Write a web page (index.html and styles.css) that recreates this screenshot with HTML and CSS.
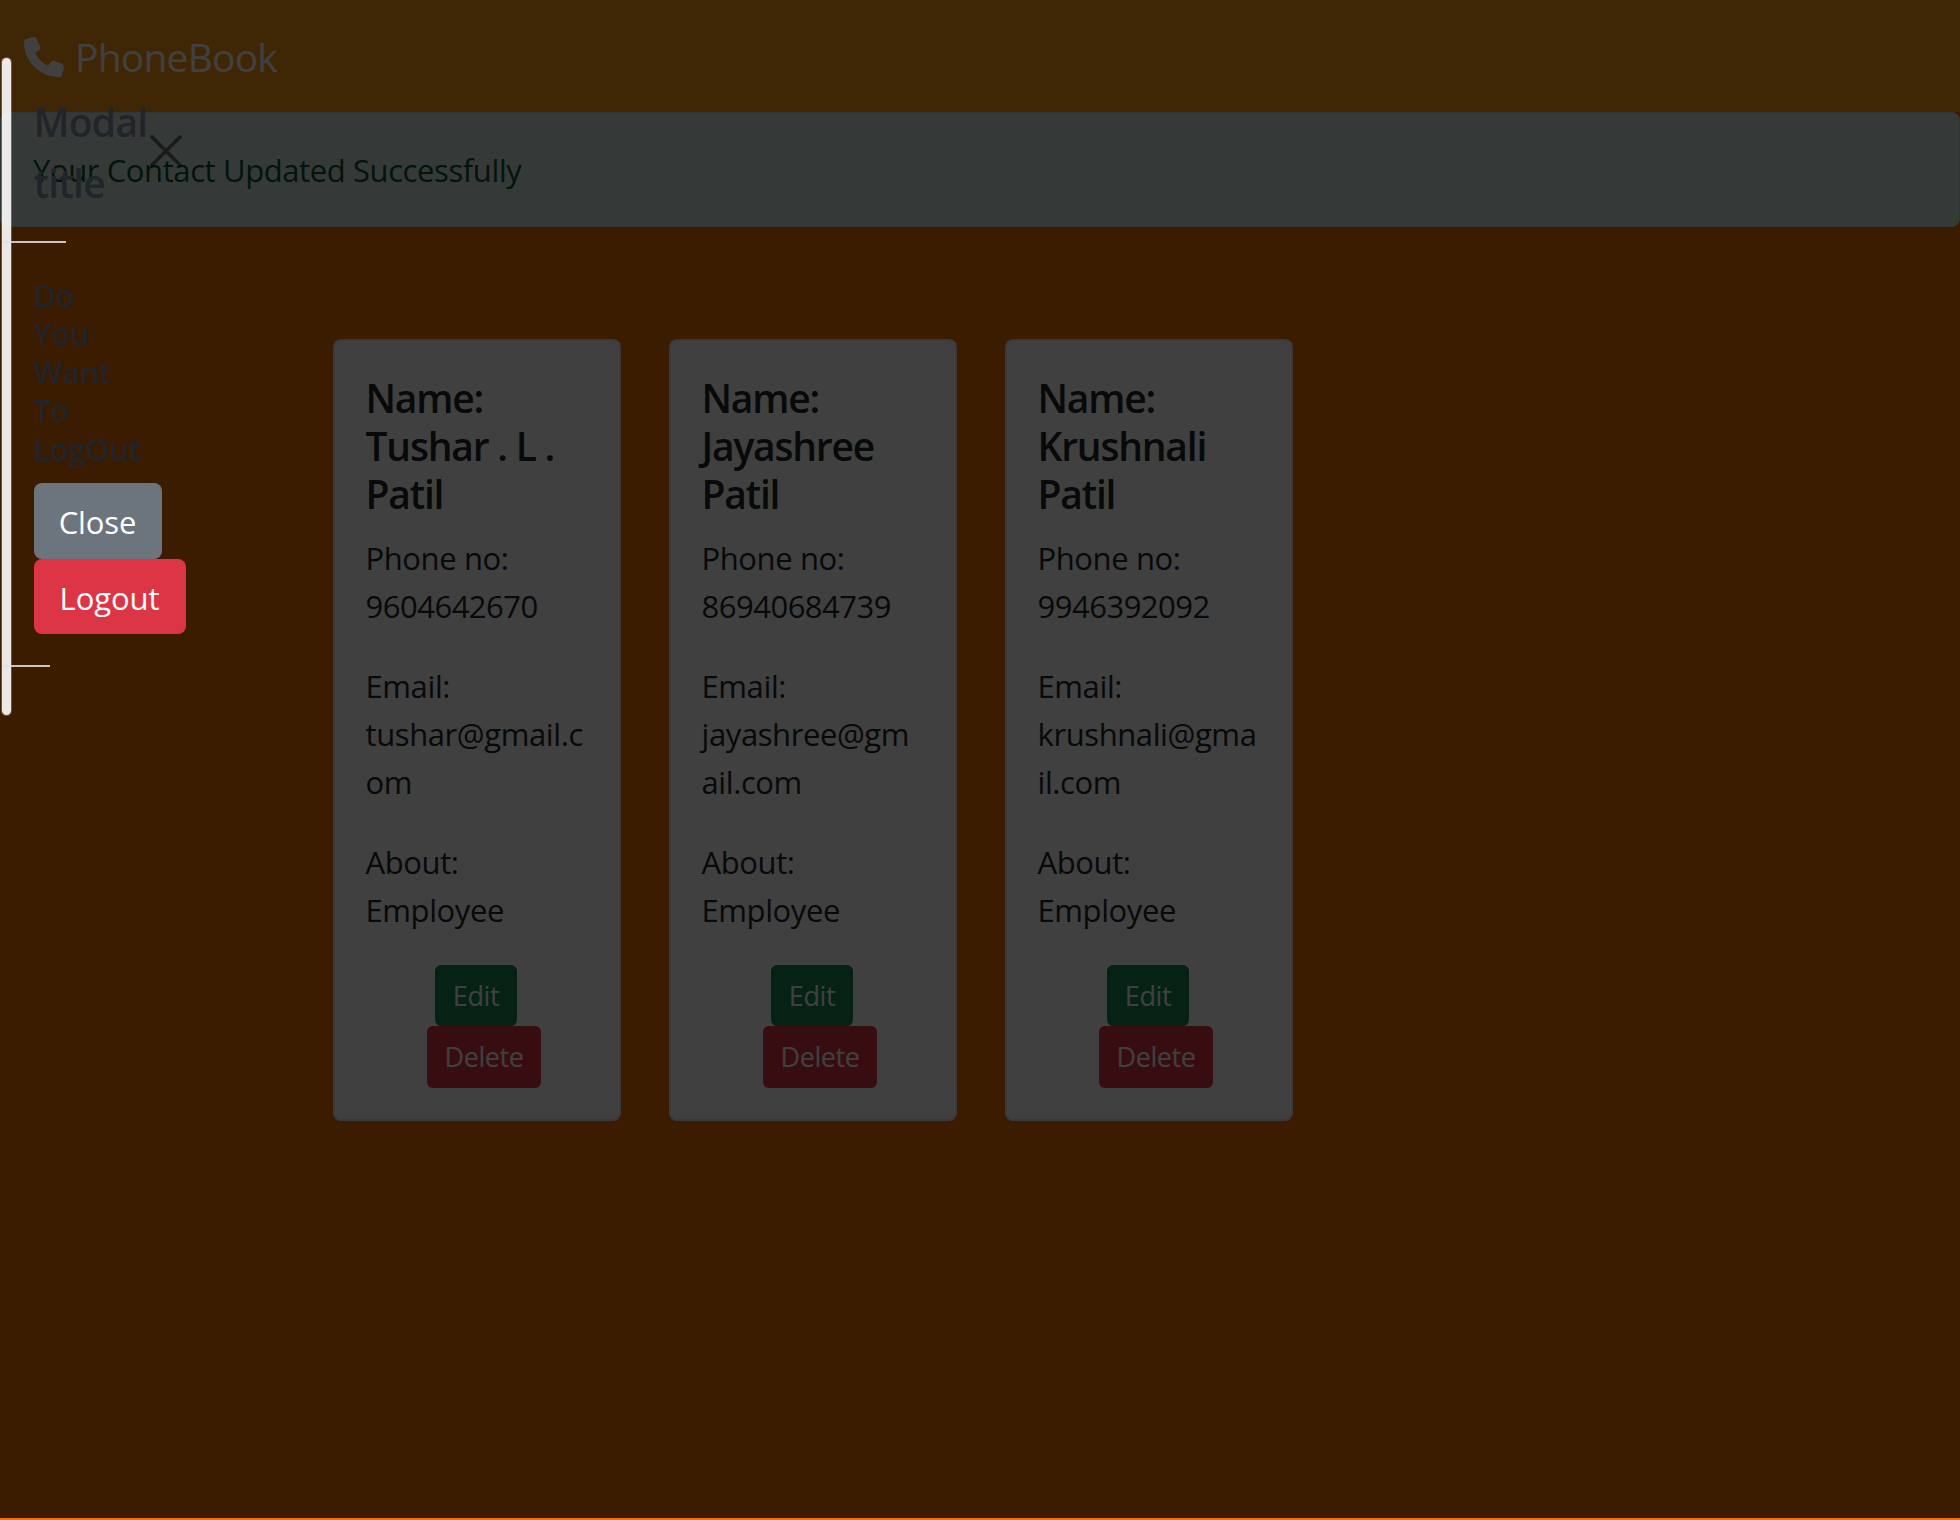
FILE: index.html
```html
<!DOCTYPE html>
<html lang="en">
<head>
<meta charset="utf-8">
<title>PhoneBook</title>
<link rel="stylesheet" href="styles.css">
</head>
<body>
<nav class="navbar">
  <svg class="brand-icon" viewBox="0 0 512 512" aria-hidden="true"><path fill="currentColor" d="M164.9 24.6c-7.7-18.600-28-28.500-47.400-23.200l-88 24C12.100 30.200 0 46 0 64c0 247.400 200.600 448 448 448c18 0 33.800-12.100 38.600-29.500l24-88c5.300-19.400-4.600-39.700-23.200-47.400l-96-40c-16.300-6.800-35.200-2.100-46.300 11.600L304.700 368C234.300 334.700 177.300 277.700 144 207.300L193.300 167c13.700-11.200 18.400-30 11.600-46.300l-40-96z"/></svg>
  <span class="brand">PhoneBook</span>
</nav>
<div class="alert">Your Contact Updated Successfully</div>
<main class="cards">
  <article class="card">
    <h5 class="card-title">Name:<br>Tushar . L .<br>Patil</h5>
    <p class="card-text">Phone no:<br><span class="digits">9604642670</span></p>
    <p class="card-text">Email:<br>tushar@gmail.c<br>om</p>
    <p class="card-text">About:<br>Employee</p>
    <div class="actions"><a class="btn-sm edit">Edit</a><a class="btn-sm delete">Delete</a></div>
  </article>
  <article class="card">
    <h5 class="card-title">Name:<br>Jayashree<br>Patil</h5>
    <p class="card-text">Phone no:<br><span class="digits">86940684739</span></p>
    <p class="card-text">Email:<br>jayashree@gm<br>ail.com</p>
    <p class="card-text">About:<br>Employee</p>
    <div class="actions"><a class="btn-sm edit">Edit</a><a class="btn-sm delete">Delete</a></div>
  </article>
  <article class="card">
    <h5 class="card-title">Name:<br>Krushnali<br>Patil</h5>
    <p class="card-text">Phone no:<br><span class="digits">9946392092</span></p>
    <p class="card-text">Email:<br>krushnali@gma<br>il.com</p>
    <p class="card-text">About:<br>Employee</p>
    <div class="actions"><a class="btn-sm edit">Edit</a><a class="btn-sm delete">Delete</a></div>
  </article>
</main>
<div class="backdrop"></div>
<div class="modal">
  <div class="modal-content"></div>
  <div class="modal-inner">
    <div class="modal-header">
      <h5 class="modal-title">Modal<br>title</h5>
      <svg class="close-icon" viewBox="0 0 32 32" aria-label="Close"><path d="M2 2L30 30M30 2L2 30" fill="none" stroke="#000" stroke-width="3.600" stroke-linecap="round"/></svg>
    </div>
    <div class="rule"></div>
    <h6 class="modal-body">Do<br>You<br>Want<br>To<br>LogOut</h6>
    <div class="modal-buttons">
      <button class="btn close-btn">Close</button>
      <button class="btn logout-btn">Logout</button>
    </div>
    <div class="rule rule-short"></div>
  </div>
</div>
</body>
</html>
```
FILE: styles.css
```css
* { box-sizing: border-box; }

body {
  margin: 0;
  height: 1520px;
  overflow: hidden;
  background: #f07000;
  color: #212529;
  font-family: "Open Sans", "Noto Sans", sans-serif;
  font-size: 31px;
  line-height: 48px;
  letter-spacing: -0.4px;
}

h5, h6, p { margin: 0; }

.navbar {
  display: flex;
  align-items: center;
  gap: 11px;
  height: 112px;
  padding: 2px 24px 0;
  background: #fa9c14;
  color: #fff;
}
.brand-icon { width: 40px; height: 40px; }
.brand { font-size: 39px; letter-spacing: -0.8px; }

.alert {
  height: 115px;
  padding: 33px 32px 0;
  border: 1px solid #badbcc;
  border-radius: 8px;
  background: #d1e7dd;
  color: #0f5132;
}

.cards {
  display: flex;
  gap: 48px;
  padding: 112px 0 0 333px;
}
.card {
  width: 288px;
  height: 782px;
  padding: 33px 30.5px 0;
  border: 2px solid rgba(0, 0, 0, .1);
  border-radius: 8px;
  background: #fff;
  white-space: nowrap;
}
.card-title {
  margin-bottom: 16px;
  font-size: 39px;
  font-weight: 600;
  letter-spacing: -1.2px;
}
.card-text { margin-bottom: 32px; }
.digits { letter-spacing: -0.5px; }

.actions {
  display: flex;
  flex-direction: column;
  align-items: flex-start;
  margin-top: -1px;
  padding-left: 61.5px;
}
.btn-sm {
  border-radius: 6px;
  color: #fff;
  font-size: 27px;
  line-height: 61px;
  text-align: center;
}
.edit { width: 82px; height: 61px; margin-left: 8px; background: #198754; }
.delete { width: 114px; height: 62px; background: #dc3545; }

.backdrop {
  position: absolute;
  top: 0;
  left: 0;
  width: 100%;
  height: 1518px;
  background: rgba(0, 0, 0, .75);
}

.modal {
  position: absolute;
  top: 57px;
  left: 1px;
  width: 200px;
  height: 659px;
}
.modal-content {
  width: 11px;
  height: 659px;
  border: 1px solid rgba(255, 255, 255, .25);
  border-radius: 6px;
  background: rgba(255, 255, 255, .9);
  background-clip: padding-box;
}
.modal-inner {
  position: absolute;
  inset: 0;
  display: flex;
  flex-direction: column;
  padding-left: 1px;
}
.modal-header {
  display: flex;
  padding: 34px 0 0 31.5px;
  height: 184px;
}
.modal-title {
  width: 116.5px;
  font-size: 39px;
  font-weight: 600;
  line-height: 61px;
  letter-spacing: -0.7px;
}
.close-icon { width: 32px; height: 32px; margin-top: 44px; opacity: .5; }
.rule { width: 64px; height: 2px; background: #dee2e6; opacity: .85; flex: none; }
.rule-short { width: 48px; margin-top: 31px; }
.modal-body {
  margin: 33px 0 15px 31.5px;
  font-size: 31px;
  font-weight: 600;
  line-height: 38.4px;
}
.modal-buttons {
  display: flex;
  flex-direction: column;
  align-items: flex-start;
  padding-left: 31.5px;
}
.btn {
  height: 75.5px;
  padding: 3px 0 0;
  border: 0;
  border-radius: 8px;
  color: #fff;
  font: inherit;
  letter-spacing: -0.1px;
}
.close-btn { width: 128px; background: #6c757d; }
.logout-btn { width: 152px; background: #dc3545; }
```
